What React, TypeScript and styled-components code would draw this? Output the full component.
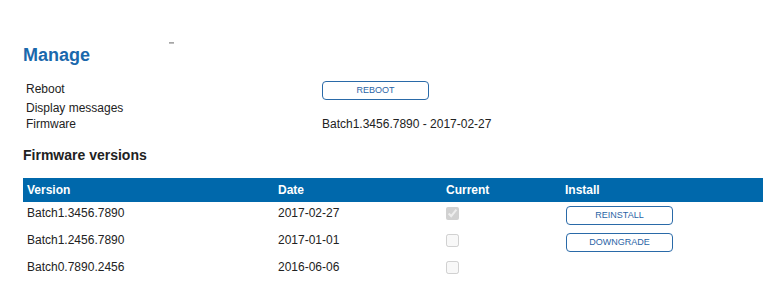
import React from "react";
import styled, { createGlobalStyle } from "styled-components";

const Global = createGlobalStyle`
  html, body { margin: 0; padding: 0; background: #fff; }
  body { font-family: "Liberation Sans", Arial, sans-serif; color: #222; }
`;

const Page = styled.div`
  padding-left: 23px;
  width: 740px;
`;

const Marker = styled.div`
  width: 5px;
  height: 2px;
  margin: 42px 0 0 146px;
  background: linear-gradient(#999, #ccc);
`;

const Title = styled.h1`
  margin: 1px 0 0;
  font-size: 18px;
  line-height: 21px;
  font-weight: bold;
  color: #1a68ac;
`;

const InfoGrid = styled.div`
  margin: 15px 0 0 3px;
  display: grid;
  grid-template-columns: 296px auto;
  align-items: start;
  font-size: 12px;
  line-height: 16px;
`;

const Label = styled.div`
  color: #222;
`;

const Value = styled.div`
  color: #222;
`;

const OutlineButton = styled.button<{ $offset?: number }>`
  display: block;
  width: 107px;
  height: 19px;
  padding: 0;
  margin: 0 0 0 ${(p) => p.$offset ?? 0}px;
  border: 1px solid #2a6aa8;
  border-radius: 4px;
  background: #fff;
  color: #2a64a6;
  font-family: "Liberation Sans", Arial, sans-serif;
  font-size: 9px;
  line-height: 17px;
  text-align: center;
  cursor: pointer;
`;

const SubTitle = styled.h2`
  margin: 15px 0 0;
  font-size: 14px;
  line-height: 16px;
  font-weight: bold;
  color: #222;
`;

const Table = styled.table`
  margin-top: 15px;
  width: 740px;
  border-collapse: collapse;
  font-size: 12px;
  line-height: 14px;
`;

const HeadCell = styled.th<{ $w?: number }>`
  background: #0068ab;
  color: #fff;
  font-weight: bold;
  text-align: left;
  padding: 5px 4px;
  width: ${(p) => (p.$w ? `${p.$w - 8}px` : "auto")};
`;

const Cell = styled.td`
  padding: 4px 4px;
  vertical-align: top;
  color: #222;
  text-align: left;
`;

const Check = styled.input`
  margin: 1px 0 0 0;
  width: 13px;
  height: 13px;
  display: block;
`;

const rows = [
  { version: "Batch1.3456.7890", date: "2017-02-27", current: true, action: "REINSTALL" },
  { version: "Batch1.2456.7890", date: "2017-01-01", current: false, action: "DOWNGRADE" },
  { version: "Batch0.7890.2456", date: "2016-06-06", current: false, action: "" },
];

export default function App() {
  return (
    <Page>
      <Global />
      <Marker />
      <Title>Manage</Title>
      <InfoGrid>
        <Label>Reboot</Label>
        <OutlineButton>REBOOT</OutlineButton>
        <Label>Display messages</Label>
        <Value />
        <Label>Firmware</Label>
        <Value>Batch1.3456.7890 - 2017-02-27</Value>
      </InfoGrid>
      <SubTitle>Firmware versions</SubTitle>
      <Table>
        <thead>
          <tr>
            <HeadCell $w={251}>Version</HeadCell>
            <HeadCell $w={168}>Date</HeadCell>
            <HeadCell $w={119}>Current</HeadCell>
            <HeadCell>Install</HeadCell>
          </tr>
        </thead>
        <tbody>
          {rows.map((r) => (
            <tr key={r.version}>
              <Cell>{r.version}</Cell>
              <Cell>{r.date}</Cell>
              <Cell>
                <Check type="checkbox" disabled defaultChecked={r.current} />
              </Cell>
              <Cell>{r.action && <OutlineButton $offset={1}>{r.action}</OutlineButton>}</Cell>
            </tr>
          ))}
        </tbody>
      </Table>
    </Page>
  );
}
